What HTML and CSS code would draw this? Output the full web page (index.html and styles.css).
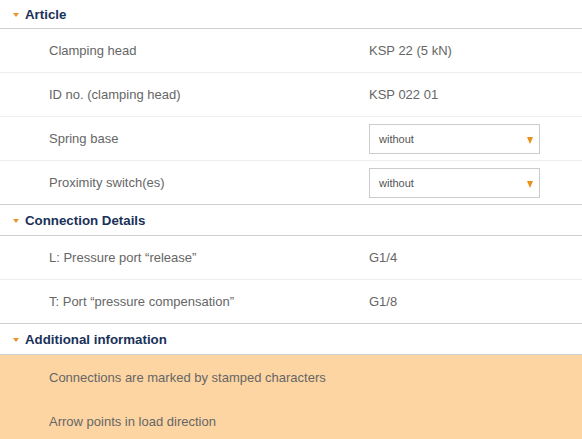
FILE: index.html
```html
<!DOCTYPE html>
<html>
<head>
<meta charset="utf-8">
<link rel="stylesheet" href="styles.css">
</head>
<body>
<div class="config">
  <section class="group">
    <div class="group-head"><span class="caret"></span>Article</div>
    <div class="row"><div class="label">Clamping head</div><div class="value">KSP 22 (5 kN)</div></div>
    <div class="row"><div class="label">ID no. (clamping head)</div><div class="value">KSP 022 01</div></div>
    <div class="row"><div class="label">Spring base</div><div class="value"><div class="select">without<span class="sel-arrow"></span></div></div></div>
    <div class="row"><div class="label">Proximity switch(es)</div><div class="value"><div class="select">without<span class="sel-arrow"></span></div></div></div>
  </section>
  <section class="group">
    <div class="group-head"><span class="caret"></span>Connection Details</div>
    <div class="row"><div class="label">L: Pressure port “release”</div><div class="value">G1/4</div></div>
    <div class="row"><div class="label">T: Port “pressure compensation”</div><div class="value">G1/8</div></div>
  </section>
  <section class="group info">
    <div class="group-head"><span class="caret"></span>Additional information</div>
    <div class="row"><div class="label">Connections are marked by stamped characters</div></div>
    <div class="row"><div class="label">Arrow points in load direction</div></div>
  </section>
</div>
</body>
</html>
```

FILE: styles.css
```css
html, body {
  margin: 0;
  padding: 0;
  background: #ffffff;
}
body {
  font-family: "Liberation Sans", Arial, sans-serif;
  font-size: 13px;
  color: #666666;
  overflow: hidden;
}
.config {
  display: flex;
  flex-direction: column;
}
.group-head {
  height: 31px;
  display: flex;
  align-items: center;
  padding-left: 13px;
  font-weight: bold;
  font-size: 13.3px;
  color: #1a3159;
  border-bottom: 1px solid #cfcfcf;
  box-sizing: border-box;
}
.group:first-child .group-head {
  height: 29px;
}
.caret {
  width: 0;
  height: 0;
  border-left: 3.5px solid transparent;
  border-right: 3.5px solid transparent;
  border-top: 4px solid #e8942a;
  margin-right: 6px;
  margin-top: 1px;
}
.row {
  display: grid;
  grid-template-columns: 320px 1fr;
  align-items: center;
  height: 44px;
  box-sizing: border-box;
  padding-left: 49px;
  border-bottom: 1px solid #eeeeee;
}
.group .row:last-child {
  border-bottom: 1px solid #cfcfcf;
}
.value {
  color: #666666;
}
.select {
  position: relative;
  width: 171px;
  height: 30px;
  box-sizing: border-box;
  border: 1px solid #cccccc;
  background: #ffffff;
  display: flex;
  align-items: center;
  padding-left: 9px;
  font-size: 11px;
  color: #555555;
}
.sel-arrow {
  position: absolute;
  right: 6px;
  top: 12px;
  width: 0;
  height: 0;
  border-left: 3.5px solid transparent;
  border-right: 3.5px solid transparent;
  border-top: 7px solid #e8901c;
}
.info .row {
  background: #fdd5a2;
  border-bottom: none;
  grid-template-columns: 1fr;
}
.info .row:last-child {
  border-bottom: none;
}
```
